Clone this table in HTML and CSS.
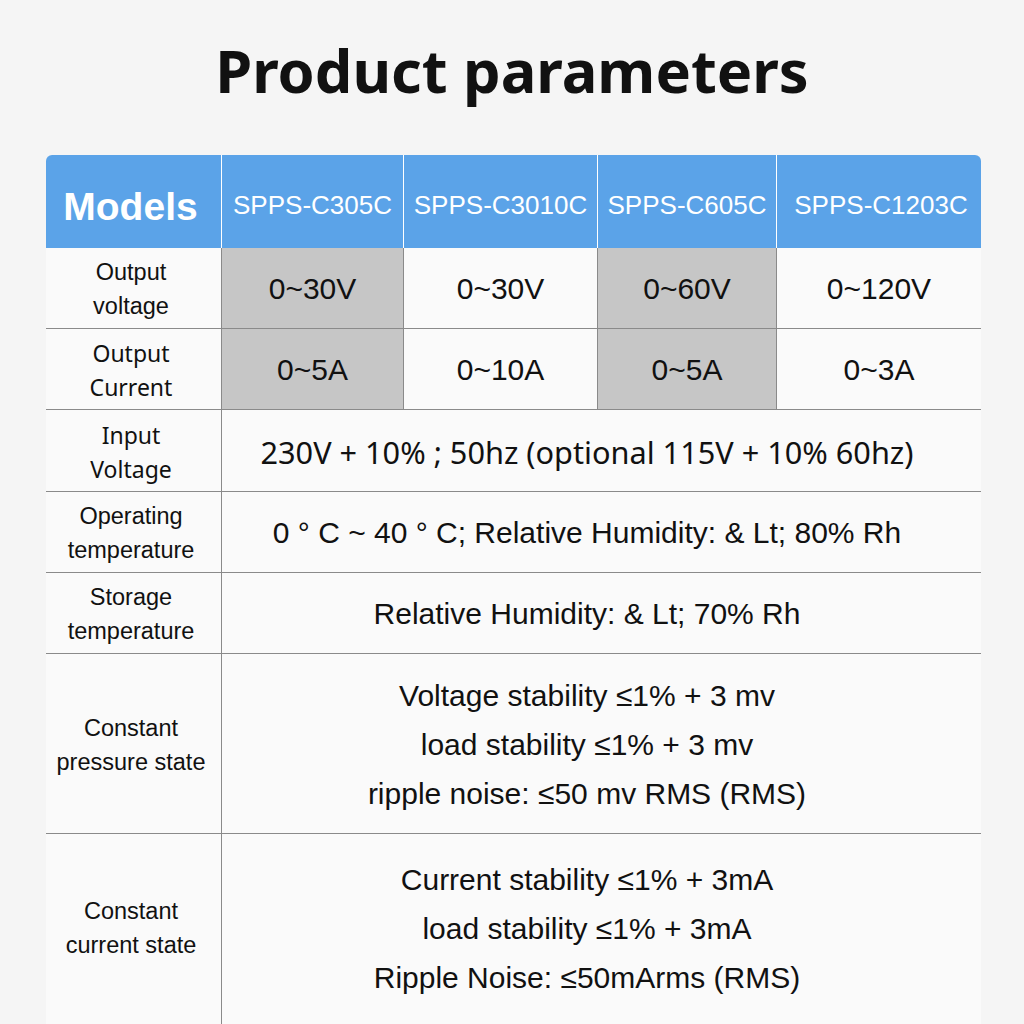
FILE: index.html
```html
<!DOCTYPE html>
<html>
<head>
<meta charset="utf-8">
<link rel="stylesheet" href="styles.css">
</head>
<body>
<h1 class="title">Product parameters</h1>
<div class="table">
  <div class="hd models">Models</div>
  <div class="hd">SPPS-C305C</div>
  <div class="hd">SPPS-C3010C</div>
  <div class="hd">SPPS-C605C</div>
  <div class="hd last">SPPS-C1203C</div>

  <div class="lb">Output<br>voltage</div>
  <div class="val gray">0~30V</div>
  <div class="val">0~30V</div>
  <div class="val gray">0~60V</div>
  <div class="val last">0~120V</div>

  <div class="lb noto">Output<br>Current</div>
  <div class="val gray">0~5A</div>
  <div class="val">0~10A</div>
  <div class="val gray">0~5A</div>
  <div class="val last">0~3A</div>

  <div class="lb noto">Input<br>Voltage</div>
  <div class="wide noto">230V + 10% ; 50hz (optional 115V + 10% 60hz)</div>

  <div class="lb">Operating<br>temperature</div>
  <div class="wide">0 ° C ~ 40 ° C; Relative Humidity: &amp; Lt; 80% Rh</div>

  <div class="lb">Storage<br>temperature</div>
  <div class="wide">Relative Humidity: &amp; Lt; 70% Rh</div>

  <div class="lb">Constant<br>pressure state</div>
  <div class="wide multi">Voltage stability ≤1% + 3 mv<br>load stability ≤1% + 3 mv<br>ripple noise: ≤50 mv RMS (RMS)</div>

  <div class="lb end">Constant<br>current state</div>
  <div class="wide multi end">Current stability ≤1% + 3mA<br>load stability ≤1% + 3mA<br>Ripple Noise: ≤50mArms (RMS)</div>
</div>
</body>
</html>
```

FILE: styles.css
```css
html, body {
  margin: 0;
  padding: 0;
  background: #f5f5f5;
  height: 1024px;
  overflow: hidden;
}
body {
  font-family: "Liberation Sans", Arial, sans-serif;
  color: #111;
}
.title {
  margin: 0;
  height: 155px;
  box-sizing: border-box;
  padding-top: 32px;
  text-align: center;
  font-family: "Noto Sans", sans-serif;
  font-weight: 700;
  font-size: 59.5px;
  line-height: 76px;
  color: #111;
  letter-spacing: 0;
}
.table {
  margin-left: 46px;
  width: 935px;
  display: grid;
  grid-template-columns: 176px 182px 194px 179px 204px;
  grid-template-rows: 93px 81px 81px 82px 81px 81px 180px 200px;
  background: #fafafa;
  border-radius: 6px 6px 0 0;
  overflow: hidden;
}
.table > div {
  box-sizing: border-box;
  display: flex;
  align-items: center;
  justify-content: center;
  text-align: center;
}
.hd {
  background: #5ba3e8;
  color: #fff;
  font-size: 26px;
  border-right: 1px solid #ffffff;
  padding-top: 8px;
}
.hd.models {
  font-weight: 700;
  font-size: 39px;
  padding-top: 10px;
  padding-right: 6px;
}
.hd.last {
  border-right: none;
  padding-left: 4px;
}
.lb {
  font-size: 23.5px;
  line-height: 34px;
  border-right: 1px solid #8a8a8a;
  border-bottom: 1px solid #8a8a8a;
  padding-top: 2px;
  padding-right: 5px;
}
.lb.noto {
  font-size: 23px;
}
.noto {
  font-family: "Noto Sans", sans-serif;
}
.val {
  font-size: 30px;
  border-right: 1px solid #8a8a8a;
  border-bottom: 1px solid #8a8a8a;
  padding-top: 2px;
}
.val.last {
  border-right: none;
}
.gray {
  background: #c6c6c6;
}
.wide {
  grid-column: 2 / 6;
  font-size: 30px;
  border-bottom: 1px solid #8a8a8a;
  padding-right: 29px;
  padding-top: 2px;
}
.wide.noto {
  font-size: 30.7px;
}
.multi {
  line-height: 49px;
}
.end {
  border-bottom: none !important;
  padding-bottom: 14px;
}
```
